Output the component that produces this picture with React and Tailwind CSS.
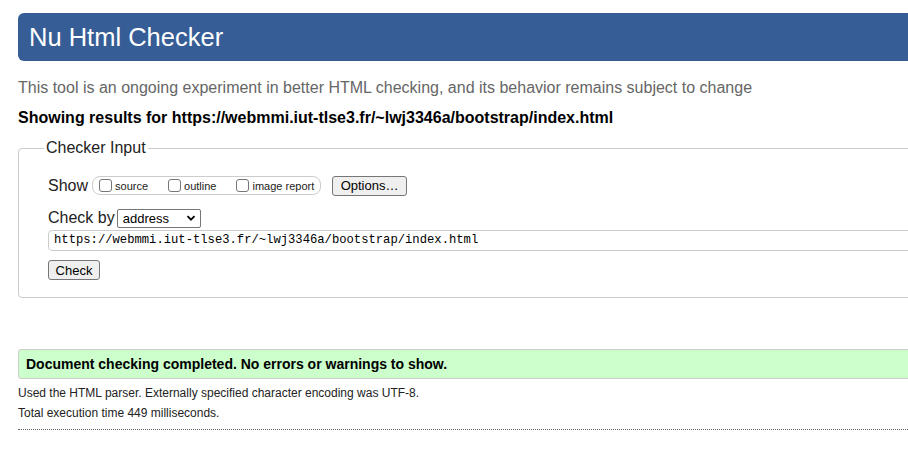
import React from 'react';

const Box = ({ label }) => (
  <span className="flex items-center">
    <span className="w-[13px] h-[13px] border border-[#767676] rounded-[3px] bg-white"></span>
    <span className="ml-[3px] mt-[2px] text-[11px] leading-[13px] text-[#222]">{label}</span>
  </span>
);

const App = () => {
  return (
    <div className="w-[908px] h-[465px] overflow-hidden bg-white">
      <div className="w-[1200px] pl-[18px] pt-[13px] font-['Liberation_Sans',Arial,sans-serif] text-[#222]">
        {/* Header */}
        <div className="h-[48px] rounded-l-[6px] bg-[#365d95] flex items-center pl-[11px]">
          <h1 className="text-white text-[25.5px] leading-[30px]">Nu Html Checker</h1>
        </div>

        <p className="mt-[18px] text-[16px] leading-[18px] text-[#666]">
          This tool is an ongoing experiment in better HTML checking, and its behavior remains subject to change
        </p>
        <p className="mt-[12px] text-[16px] leading-[18px] font-bold text-black">
          Showing results for https://webmmi.iut-tlse3.fr/~lwj3346a/bootstrap/index.html
        </p>

        {/* Checker input */}
        <fieldset className="mt-[12px] border border-[#ccc] rounded-[4px] px-[29px] pt-[19px] pb-[17px]">
          <legend className="ml-[-4px] px-[2px] text-[16px] leading-[18px] text-[#222]">Checker Input</legend>

          <div className="flex items-center h-[19px]">
            <span className="text-[16px] leading-[18px]">Show</span>
            <div className="ml-[4px] w-[229px] h-[19px] border border-[#ccc] rounded-[8px] flex items-center pl-[6px] gap-[20px]">
              <Box label="source" />
              <Box label="outline" />
              <Box label="image report" />
            </div>
            <button className="ml-[11px] w-[75px] h-[20px] bg-[#efefef] border border-[#767676] rounded-[3px] text-[13px] leading-[15px] text-black flex items-center justify-center">
              Options…
            </button>
          </div>

          <div className="mt-[14px] flex items-center h-[18px]">
            <span className="text-[16px] leading-[18px]">Check by</span>
            <div className="ml-[2px] w-[84px] h-[19px] border border-[#767676] rounded-[2px] bg-white flex items-center justify-between pl-[5px] pr-[4px]">
              <span className="text-[13px] leading-[15px] text-black">address</span>
              <svg width="10" height="10" viewBox="0 0 10 10" fill="none" stroke="#000" strokeWidth="1.8">
                <path d="M1.5 3.2 L5 6.7 L8.5 3.2" />
              </svg>
            </div>
          </div>

          <div className="mt-[3px] h-[21px] border border-[#ccc] rounded-[4px] flex items-center pl-[5px]">
            <span className="font-['Liberation_Mono','DejaVu_Sans_Mono',monospace] text-[12.2px] leading-[15px] text-black">
              https://webmmi.iut-tlse3.fr/~lwj3346a/bootstrap/index.html
            </span>
          </div>

          <button className="mt-[9px] w-[52px] h-[20px] bg-[#efefef] border border-[#767676] rounded-[3px] text-[13px] leading-[15px] text-black flex items-center justify-center">
            Check
          </button>
        </fieldset>

        {/* Result */}
        <div className="mt-[51px] h-[30px] bg-[#ccffcc] border border-r-0 border-[#ccc] rounded-l-[4px] flex items-center pl-[7px]">
          <span className="text-[14px] leading-[16px] font-bold text-black">
            Document checking completed. No errors or warnings to show.
          </span>
        </div>

        <p className="mt-[7px] text-[12px] leading-[14px] text-[#222]">
          Used the HTML parser. Externally specified character encoding was UTF-8.
        </p>
        <p className="mt-[6px] text-[12px] leading-[14px] text-[#222]">Total execution time 449 milliseconds.</p>

        <div className="mt-[9px] border-t border-dotted border-[#666]"></div>
      </div>
    </div>
  );
};

export default App;
